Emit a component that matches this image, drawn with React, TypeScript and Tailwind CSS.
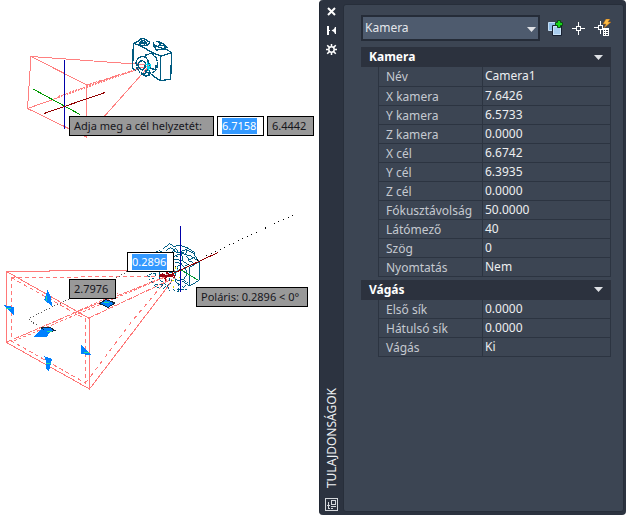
import { useState } from "react";
import type { ReactNode } from "react";

const sections = [
  {
    title: "Kamera",
    rows: [
      ["Név", "Camera1"],
      ["X kamera", "7.6426"],
      ["Y kamera", "6.5733"],
      ["Z kamera", "0.0000"],
      ["X cél", "6.6742"],
      ["Y cél", "6.3935"],
      ["Z cél", "0.0000"],
      ["Fókusztávolság", "50.0000"],
      ["Látómező", "40"],
      ["Szög", "0"],
      ["Nyomtatás", "Nem"],
    ],
  },
  {
    title: "Vágás",
    rows: [
      ["Első sík", "0.0000"],
      ["Hátulsó sík", "0.0000"],
      ["Vágás", "Ki"],
    ],
  },
];

function Arrow({ className = "" }: { className?: string }) {
  return (
    <svg className={className} width="9" height="5" viewBox="0 0 9 5" aria-hidden="true">
      <path d="M0 0h9L4.5 5z" fill="#dfe1e5" />
    </svg>
  );
}

function Section({ title, rows }: { title: string; rows: string[][] }) {
  const [open, setOpen] = useState(true);

  return (
    <section>
      <button
        onClick={() => setOpen(!open)}
        className="flex h-5 w-full items-center justify-between bg-[#2c323e] px-2 text-left font-bold text-white"
      >
        {title}
        <Arrow />
      </button>
      {open && (
        <div className="pl-[17px]">
          <table className="w-full table-fixed border-collapse">
            <tbody>
              {rows.map(([label, value]) => (
                <tr key={label} className="h-[19px]">
                  <th scope="row" className="w-[104px] border border-t-0 border-[#2c3441] p-0 pt-[2px] pl-[7px] text-left font-normal leading-4 text-[#c5c9d0]">
                    {label}
                  </th>
                  <td className="border border-t-0 border-[#2c3441] p-0 pl-[2px] leading-[18px] text-[#eceef0]">{value}</td>
                </tr>
              ))}
            </tbody>
          </table>
        </div>
      )}
    </section>
  );
}

function Tip({ children, className }: { children: ReactNode; className: string }) {
  return (
    <div className={"absolute flex h-5 items-center whitespace-nowrap border border-black bg-[#999999] px-1 text-[11px] text-[#16161c] " + className}>
      {children}
    </div>
  );
}

function DynInput({ label, value, className }: { label: string; value: string; className: string }) {
  return (
    <div className={"absolute flex h-5 w-[47px] items-center border border-black bg-white px-1 text-[11px] " + className}>
      <input aria-label={label} defaultValue={value} className="h-4 w-[35px] bg-[#3399ff] text-white outline-none" />
    </div>
  );
}

function Drawing() {
  return (
    <svg className="block" width="318" height="400" viewBox="0 0 318 400" fill="none" shapeRendering="crispEdges" aria-hidden="true">
      {/* first camera */}
      <g stroke="#ff8080">
        <path d="M150 64.500L128 63.500L31 56.500L27.500 108.500L86 137V84.500L31 56.500M150 65L86 137" />
        <path d="M27.500 108.500L60 97M120 75.500L150 65" />
        <path d="M58 97L120 75" strokeWidth="2" strokeDasharray="2 1" />
        <path d="M87 85L150 65" strokeDasharray="5 1" />
      </g>
      <g transform="translate(110 30) scale(.33333)" stroke="#005a80" strokeWidth="4">
        <path d="M70 40L68 115L78 122M70 40L83 44L100 52L125 67L153 78L185 68L182 147L152 152V78" />
        <path d="M72 38L86 34L92 27L102 26L112 32L119 37L112 45L98 48L88 42L92 34L106 31M90 38L112 39M96 32L104 45M86 44L108 34" />
        <path d="M130 36L132 50M137 34L148 36L165 45L170 52L160 56L145 51L130 43M140 60L134 52L152 46L166 48M137 61L158 57L172 60L185 68M145 36L152 43L145 49" />
        <path d="M116 70L128 72L139 84L143 100L140 118L132 126L120 130M105 76L118 72M95 80L107 81L114 91L116 106L112 120L103 133L91 128L81 115L78 99L83 86L95 80" strokeDasharray="18 3" />
        <path d="M88 94L98 92L106 99L105 113L98 120L88 115L84 105ZM116 126L135 142L152 152M119 98L122 116L136 118L138 106M106 122L118 132V120M94 132L108 138L120 134M158 151L162 153" />
        <path d="M104 104L122 104L117 115M112 95L115 122" stroke="#00d8ee" />
      </g>
      <path d="M64.500 60V129" stroke="#0000aa" strokeWidth="1" />
      <path d="M33 89L80 114.500" stroke="#009900" />
      <path d="M44 113.500L105 92.500" stroke="#900000" />

      {/* second camera */}
      <g stroke="#ff7878">
        <path d="M175 270.500H50L49 271.500H6.500V342.500L89.500 389V318.500L6.500 271.500M89.500 389L172 281" />
        <path d="M7 342L79 311L172 274M89 318L172 279" strokeDasharray="6 1" />
        <path d="M14 341L80 313L170 275M76 312L118 293" strokeDasharray="3 2" />
        <path d="M11 277.500L155 276.500" strokeDasharray="4 3" />
        <path d="M11.500 277V341L85.500 383V319L12 278" strokeDasharray="4 3" />
        <path d="M85.500 383L133 320L170 276" strokeDasharray="4 4" />
      </g>
      <path d="M69 299L29.500 318V321L45 329M116 278L128 271" stroke="#555" strokeDasharray="1 2" />
      <g transform="translate(140 225) scale(.33333)" stroke="#005f86" strokeWidth="3">
        <path d="M68 71L90 56L102 64L120 61L142 68L165 83L164 92L178 110V166L149 183V127L178 110" />
        <path d="M78 77L91 68L104 75L91 84M98 76L114 83L138 74L162 86M102 94L124 85L152 93L177 109M102 102L126 107L150 123M124 85L129 105M142 69L137 87M107 69L114 82L132 82M139 93L148 105L165 96" />
        <path d="M104 111L120 115L137 130L141 147L131 163L113 167L101 157M126 167L149 183M134 119L149 127M144 107L160 112" />
        <path d="M47 82L57 76L68 83M38 95L46 87M26 148L50 145L40 161L27 165M34 168L44 183L58 190L76 173M58 141V165L70 172L84 185M88 143L108 139V165L90 169ZM82 183L90 197M98 193L118 201M106 170L130 187M116 175V200M110 195L140 195M26 140L40 132M22 152L34 158M70 190L92 174M132 165L142 178M94 98L118 92M112 124L126 116M46 180L68 178M130 188L144 172" strokeDasharray="9 4" />
        <path d="M58 157L66 145L76 163L82 141L88 157L98 143L102 159M58 153H104M62 149H94" stroke="#9c0010" strokeWidth="4" strokeDasharray="12 3" />
        <path d="M78 149H84M98 160H108" stroke="#c8b8b8" strokeWidth="4" />
        <path d="M96 167H102M106 125V131M100 183V188M120 155V160" stroke="#dddd00" />
        <path d="M102 147L120 133M114 127V140" stroke="#20d8e8" />
        <path d="M104 124L120 134" stroke="#202020" strokeDasharray="5 3" />
      </g>
      <path d="M293 215L187 265" stroke="#000" strokeDasharray="1 4" />
      <path d="M180.500 226V292" stroke="#0000aa" />
      <path d="M170 275L218 252.500" stroke="#900000" />
      <path d="M181 270L198 280" stroke="#009933" />
      <g fill="#0080ff">
        <path d="M41 328L49 327L55 330.500L48 332.500ZM99.500 303.500L106 299.500L115 303L108 307.500Z" stroke="#182838" />
        <path d="M3 305L14 307V316ZM47.500 290L51 297L52 306L44 300ZM44 356L52 359L49 371L46 369V361ZM81 344L92 355.500L81 354ZM33 337L41 329L50 332L47 337Z" />
        <path d="M6 308H11M46 296V301M46 363H51M84 352H89M104 303L109 302M47 331H52" stroke="#20dc9a" />
      </g>
    </svg>
  );
}

const railButton = "flex h-[19px] w-full items-center justify-center";

export default function App() {
  return (
    <div className="flex min-h-screen bg-white font-['Noto_Sans','Open_Sans',sans-serif] text-[12px] leading-4">
      <main className="relative min-w-0 flex-1 overflow-hidden">
        <Drawing />
        <Tip className="left-[69px] top-[116px] w-[145px]">Adja meg a cél helyzetét:</Tip>
        <DynInput label="Cél X" value="6.7158" className="left-[217px] top-[116px]" />
        <Tip className="left-[267px] top-[116px] w-[47px]">6.4442</Tip>
        <DynInput label="Távolság" value="0.2896" className="left-[127px] top-[252px]" />
        <Tip className="left-[69px] top-[279px] w-[47px]">2.7976</Tip>
        <Tip className="left-[196px] top-[287px] w-[112px]">Poláris: 0.2896 &lt; 0°</Tip>
      </main>

      <aside className="flex w-[307px] shrink-0 rounded-sm border-l border-[#202733] bg-[#2c3340]">
        <div className="flex w-[23px] flex-col items-center pt-[2px] pb-1">
          <button aria-label="Bezárás" className={railButton}>
            <svg width="9" height="9" viewBox="0 0 9 9">
              <path d="M1 1l7 7M8 1L1 8" stroke="#fff" strokeWidth="2" />
            </svg>
          </button>
          <button aria-label="Automatikus elrejtés" className={railButton}>
            <svg width="9" height="9" viewBox="0 0 9 9" fill="#fff">
              <path d="M0 0h2v9H0zM2 4h1v1H2zM9 1v7H8L7 6 4.500 4.500 7 3l1-2z" />
            </svg>
          </button>
          <button aria-label="Beállítások" className={railButton}>
            <svg width="11" height="11" viewBox="0 0 11 11" fill="none" stroke="#fff">
              <circle cx="5.500" cy="5.500" r="2.700" strokeWidth="1.500" />
              <path d="M5.500 0v2.500M5.500 8.500V11M0 5.500h2.500M8.500 5.500H11M1.200 1.200l2.200 2.200M9.800 1.200L7.600 3.400M1.200 9.800l2.200-2.200M9.800 9.800L7.600 7.600" strokeWidth="1.500" />
            </svg>
          </button>
          <h1 className="mt-auto mb-[10px] rotate-180 [writing-mode:vertical-rl] text-[#eef0f2]">TULAJDONSÁGOK</h1>
          <button aria-label="Tulajdonságok">
            <svg width="13" height="13" viewBox="0 0 13 13" fill="none" stroke="#d5d8dc" shapeRendering="crispEdges">
              <path d="M.5.500h12v12H.5zM6.500 2.500h4v4h-4zM6 8.500h5M3.500 4v7M2 7.500h3M3 10.500h2M6 10.500h2" />
            </svg>
          </button>
        </div>

        <div className="mt-1 mr-[2px] mb-[3px] min-w-0 flex-1 rounded-[3px] border border-[#272e3a] bg-[#3c4553] pt-[10px] pr-3 pl-[17px]">
          <div className="flex items-center">
            <div className="relative min-w-0 flex-1">
              <select
                aria-label="Objektumtípus"
                className="block h-[26px] w-full appearance-none border-2 border-[#252c38] bg-[#4e5b6e] pl-[2px] text-[#e4e7eb]"
              >
                <option>Kamera</option>
              </select>
              <Arrow className="pointer-events-none absolute top-3 right-1" />
            </div>
            <div className="flex w-[71px] items-center gap-2 pl-2">
              <button aria-label="PICKADD">
                <svg width="16" height="16" viewBox="0 0 16 16">
                  <path d="M.5 2.500h9v8h-9z" fill="#8fbce6" stroke="#c4def4" />
                  <path d="M4.500 5.500h9v10h-9z" fill="#a9cdee" stroke="#182030" />
                  <path d="M5.500 6.500h7v8h-7z" fill="#a9cdee" stroke="#cde4f8" />
                  <path d="M9.500.500h3v2h2v3h-2v2h-3v-2h-2v-3h2z" fill="#16d616" stroke="#0c4a18" />
                </svg>
              </button>
              <button aria-label="Objektumok kiválasztása">
                <svg width="14" height="16" viewBox="0 0 14 16" fill="none" stroke="#fff" shapeRendering="crispEdges">
                  <path d="M6.500 2v4M6.500 11v4M0 8.500h4M9 8.500h4M4.500 6.500h4v4h-4z" />
                </svg>
              </button>
              <button aria-label="Gyorskiválasztás">
                <svg width="17" height="18" viewBox="0 0 17 18" fill="none">
                  <path d="M6.500 2v4M6.500 11v4M0 8.500h4M4.500 6.500h4v4h-4z" stroke="#fff" shapeRendering="crispEdges" />
                  <path d="M12 0h4l-2 3h3l-7 6 2-4H9z" fill="#ffbd45" stroke="#ad6210" strokeWidth=".5" />
                  <path d="M9 9h6v8H9z" fill="#fff" />
                  <path d="M10 11.500h1M12 11.500h2M10 13.500h1M12 13.500h2M10 15.500h1M12 15.500h2" stroke="#343b46" shapeRendering="crispEdges" />
                </svg>
              </button>
            </div>
          </div>
          <div className="mt-[6px] flex flex-col gap-[3px]">
            {sections.map((section) => (
              <Section key={section.title} title={section.title} rows={section.rows} />
            ))}
          </div>
        </div>
      </aside>
    </div>
  );
}
